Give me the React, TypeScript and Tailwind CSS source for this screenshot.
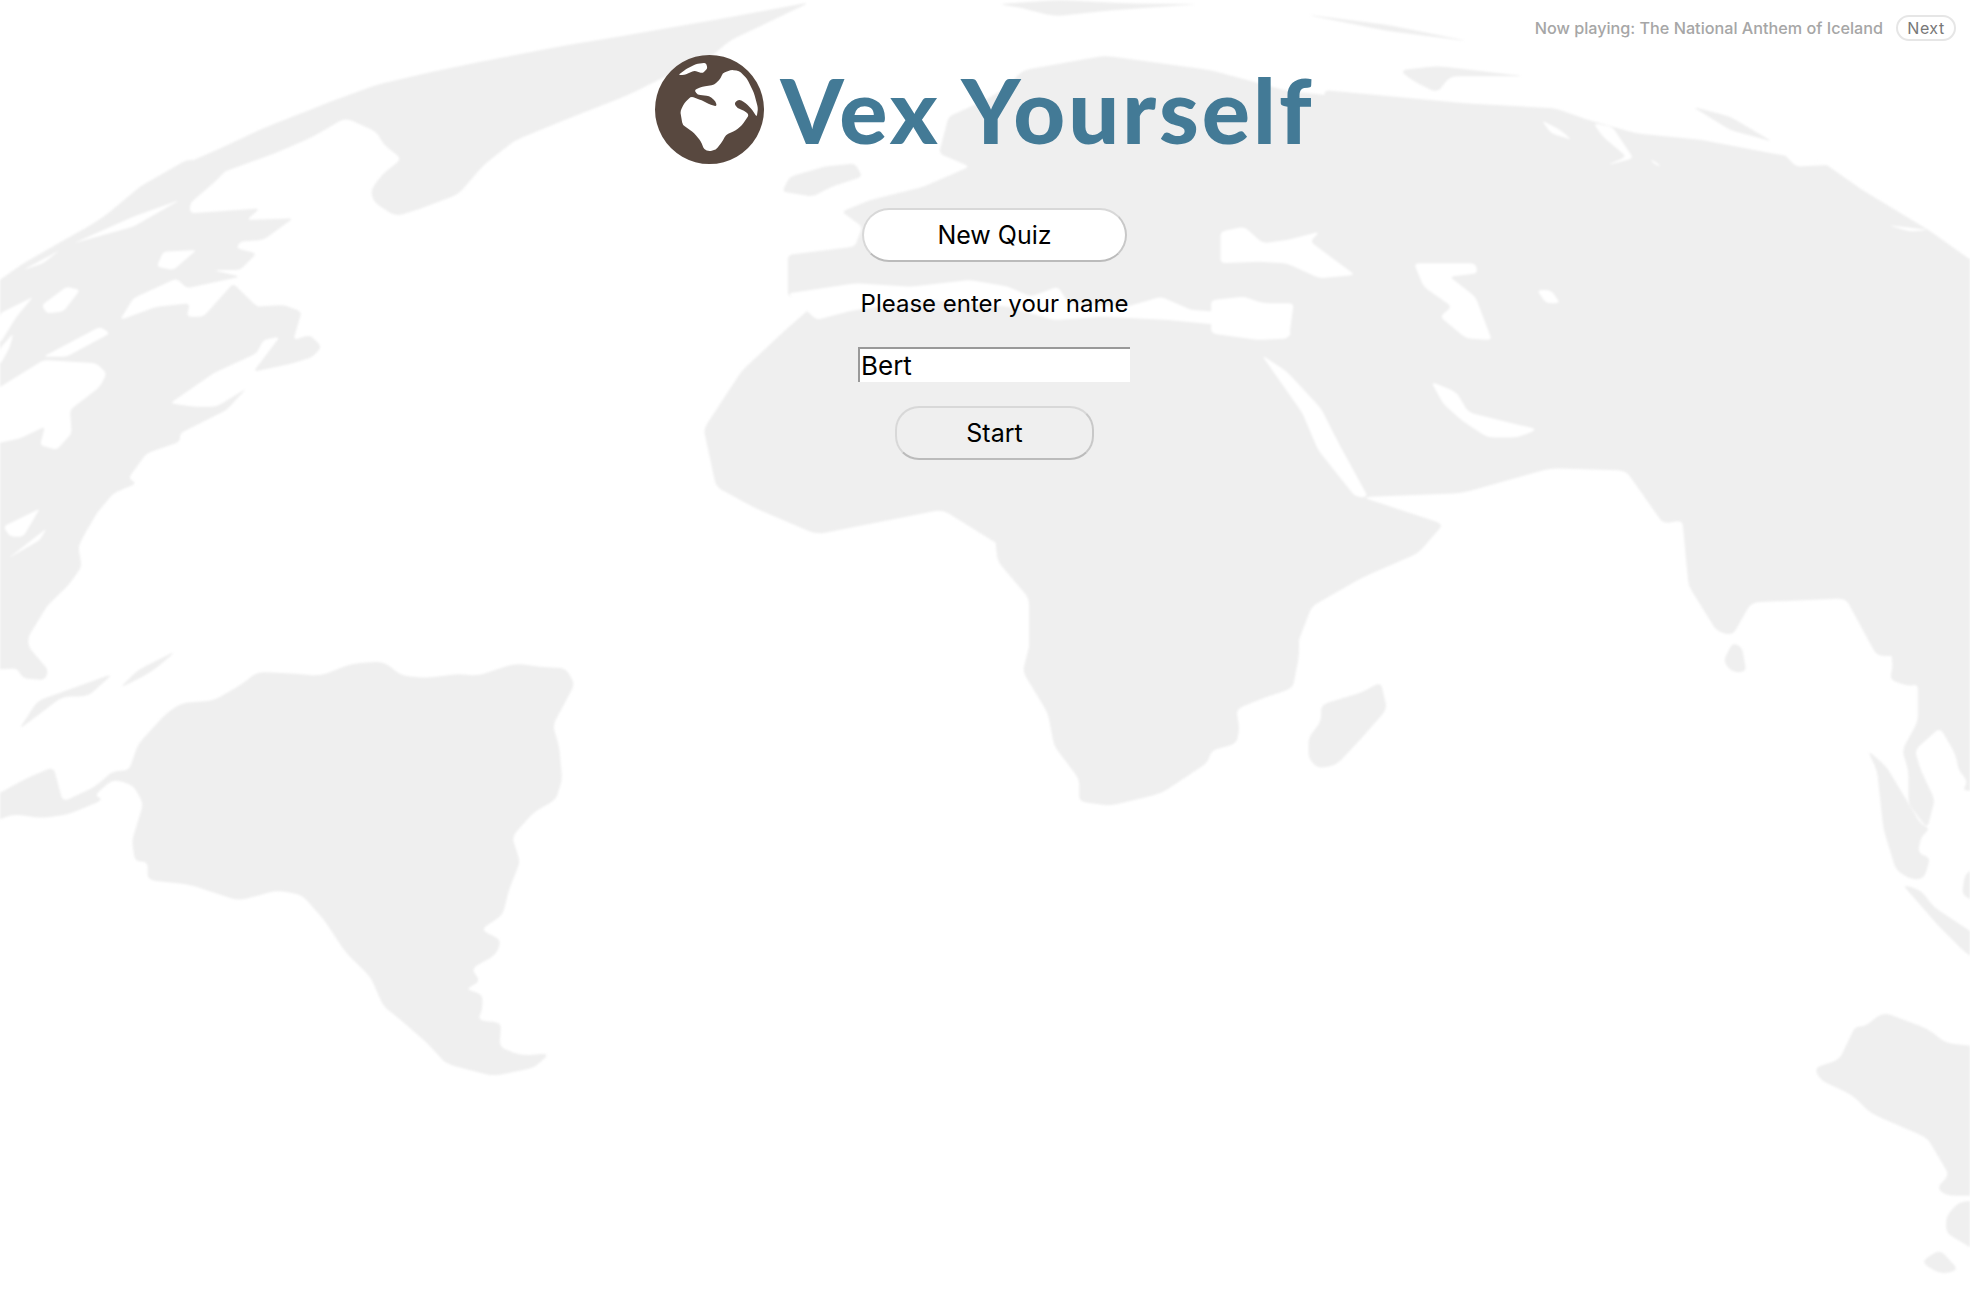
const rounded = (s: string, r = 14) => {
  const p = s.trim().split(/\s+/).map((t) => t.split(",").map(Number));
  const n = p.length;
  let d = "";
  p.forEach((c, i) => {
    const a = p[(i - 1 + n) % n];
    const b = p[(i + 1) % n];
    const la = Math.hypot(a[0] - c[0], a[1] - c[1]) || 1;
    const lb = Math.hypot(b[0] - c[0], b[1] - c[1]) || 1;
    const ra = Math.min(r, la / 2);
    const rb = Math.min(r, lb / 2);
    const s1 = [c[0] + ((a[0] - c[0]) * ra) / la, c[1] + ((a[1] - c[1]) * ra) / la];
    const s2 = [c[0] + ((b[0] - c[0]) * rb) / lb, c[1] + ((b[1] - c[1]) * rb) / lb];
    d += `${i ? "L" : "M"}${s1[0].toFixed(1)} ${s1[1].toFixed(1)}Q${c[0]} ${c[1]} ${s2[0].toFixed(1)} ${s2[1].toFixed(1)}`;
  });
  return d + "Z";
};

const Q1_LAND = [
  "1290,5 1150,45 1000,85 900,110 780,145 700,170 600,205 520,250 420,310 350,360 260,420 200,490 100,590 30,650 -20,700 -20,720 30,660 100,600 170,530 260,450 350,420 440,370 500,330 550,285 600,320 610,350 640,385 610,420 590,460 595,490 630,525 680,500 730,470 770,400 820,340 900,290 1000,230 1080,170 1130,140 1160,100",
  "1590,1320 1500,1235 1300,1295 1200,1230 1140,1180 1120,1040 1180,900 1250,800 1310,720 1590,680",
];
const NA_LAND = [
  "710,-30 640,40 570,100 570,130 780,115 740,150 880,145 790,210 720,215 710,235 770,250 720,300 640,300 720,320 560,355 530,325 400,385 360,450 470,410 570,400 560,440 610,440 700,340 770,410 850,405 905,425 880,510 930,495 965,530 940,560 880,580 760,605 840,500 790,510 770,550 640,610 510,700 580,710 650,710 740,655 680,720 540,790 540,815 440,850 385,925 410,940 340,970 290,1030 250,1100 235,1130 245,1190 210,1240 140,1310 85,1400 85,1430 145,1500 135,1530 70,1525 50,1495 -30,1500 -30,350 70,280 210,200 300,150 420,50 560,-30",
];
const NA_HOLES = [
  "-30,670 130,570 290,580 320,610 300,650 210,720 215,790 170,840 120,825 135,770 60,805 -30,825",
  "0,430 100,380 50,440 0,520",
  "0,535 40,490 30,530 0,585",
  "125,405 200,350 240,360 190,425 140,430",
  "220,220 400,140 540,90 400,170",
  "70,300 180,240 130,280",
  "470,290 490,245 590,240 520,300",
  "400,400 530,330 430,395",
  "130,560 300,470 330,490 200,560",
  "10,1070 120,1015 70,1100 30,1100",
  "25,1165 140,1075 120,1110",
];
const Q2_LAND = [
  "-20,300 60,170 190,135 360,170 480,220 600,240 760,280 900,300 1000,390 1080,400 1200,400 1300,440 1420,530 1500,590 1590,640 1590,1590 1420,1590 1370,1450 1220,1460 1190,1540 1165,1530 1120,1420 1110,1260 1080,1270 1020,1140 900,1135 760,1195 600,1205 730,1270 690,1340 600,1400 520,1470 490,1590 70,1590 70,1450 20,1360 15,1290 -20,1270",
  "20,10 120,0 230,8 340,10 200,25 110,40 60,20",
  "510,35 640,60 770,100 640,75",
  "660,170 720,160 860,185 740,185 720,225 680,195",
];
const Q2_HOLES = [
  "440,860 480,900 535,990 565,1080 610,1205 590,1205 530,1090 505,1000",
  "710,925 750,950 770,1000 850,1030 880,1040 850,1060 800,1060 760,1020 730,980",
];
const SIB_LAND = [
  "200,-30 500,10 690,25 760,60 860,100 1000,120 1150,160 1260,190 1340,270 1480,390 1570,480 1570,900 200,900",
  "980,20 1060,50 1150,125 1060,90",
];
const SIB_HOLES = [
  "660,60 700,90 725,120 680,100",
  "770,70 810,80 855,175 800,195 840,170 790,110",
  "890,175 915,200 900,195",
  "1165,150 1270,195 1200,200",
  "1395,375 1480,390 1440,395",
  "390,490 520,490 525,520 465,530 520,590 555,720 500,715 445,650 470,620 410,560",
  "650,570 680,570 700,610 670,610",
  "-20,395 30,380 70,430 120,420 190,395 170,425 265,525 190,535 120,490 60,485 -20,490",
  "-40,600 30,590 70,610 135,610 125,715 60,720 -40,700",
];
const Q3_LAND = [
  "30,200 60,130 180,65 140,120 100,120",
  "190,100 220,55 280,10 250,50 230,70",
  "290,135 340,130 385,90 410,60 470,65 510,70 560,40 610,35 640,70 680,75 730,65 760,70 820,40 870,50 900,50 915,90 880,190 890,240 895,320 885,370 850,400 815,460 828,520 810,590 800,650 765,685 798,710 790,745 750,780 765,810 740,830 768,840 768,880 760,905 798,910 795,970 830,990 875,985 850,1020 785,1040 710,1010 680,960 635,900 610,870 590,800 550,740 515,660 480,600 440,590 380,615 300,575 235,565 235,520 215,520 210,470 228,380 212,335 180,320 150,360 165,370 110,405 70,415 20,405 -20,430 -20,370 40,320 85,290 100,375 150,340 180,300 205,300 220,235 265,160",
];
const Q4_LAND = [
  "75,-30 60,60 100,160 110,240 150,320 150,375 200,385 280,355 355,280 360,250 400,235 405,200 400,150 450,120 490,100 500,20 500,-30",
  "630,85 640,150 600,220 560,285 530,295 515,270 515,220 535,180 535,140 600,110",
  "1190,-10 1205,0 1212,60 1190,62 1175,35",
  "1440,-30 1445,50 1440,80 1470,95 1485,90 1485,180 1460,250 1470,300 1470,380 1500,440 1512,370 1490,300 1480,250 1520,195 1545,260 1550,300 1565,325 1555,350 1590,345 1590,-30",
  "1405,250 1435,290 1490,430 1505,440 1490,460 1485,500 1505,510 1495,560 1475,565 1450,540 1430,440 1420,300",
  "1460,575 1490,590 1510,630 1540,660 1590,710 1590,770 1560,740 1520,680",
  "1590,520 1560,550 1555,600 1590,630",
  "1430,885 1500,925 1530,960 1590,970 1590,1330 1530,1330 1515,1310 1535,1280 1500,1190 1410,1130 1380,1085 1330,1050 1320,1020 1360,1000 1385,920 1400,920",
  "1590,1340 1550,1345 1530,1380 1530,1420 1590,1475",
  "1490,1490 1520,1460 1550,1510 1520,1520",
];
const EU_LAND = [
  "125,375 300,350 320,290 265,245 340,210 480,170 600,110 520,70 545,-40 640,-90 760,-170 900,-200 1100,-100 1100,600 125,500",
  "110,185 130,140 220,110 300,100 320,140 240,170 190,200",
];
const EU_HOLES = [
  "125,490 300,460 450,470 600,450 700,470 760,500 830,470 860,520 1010,530 1100,500 1180,540 1430,560 1440,620 1300,590 1120,570 950,560 820,570 700,530 500,510 300,540 200,570",
];

const GLOBE_LAND =
  rounded("112,105 135,88 165,72 195,68 200,85 185,100 160,92 130,105", 6) +
  rounded(
    "245,100 270,90 295,92 320,118 340,160 352,205 348,232 335,210 315,190 295,178 280,190 290,205 310,212 325,225 305,255 285,272 255,285 245,305 225,330 205,335 190,330 180,305 160,280 125,255 118,215 130,190 150,170 175,178 210,195 228,200 225,185 205,168 170,165 160,150 185,140 220,135 240,115",
    8,
  );

function Land({ shapes, holes = [], transform }: { shapes: string[]; holes?: string[]; transform: string }) {
  return (
    <g transform={transform}>
      {shapes.map((s, i) => (
        <path key={i} d={rounded(s)} className="fill-[#efefef]" />
      ))}
      {holes.map((s, i) => (
        <path key={i} d={rounded(s, 12)} className="fill-white" />
      ))}
    </g>
  );
}

function WorldMap() {
  return (
    <svg viewBox="0 0 1970 1294" className="absolute inset-0 h-[1294px] w-[1970px] blur-[1px]" aria-hidden="true">
      <Land shapes={Q1_LAND} transform="scale(.6282 .41263)" />
      <Land shapes={NA_LAND} transform="translate(0 170) scale(.33333)" />
      <Land shapes={Q2_LAND} transform="translate(985 0) scale(.6282 .41263)" />
      <Land shapes={SIB_LAND} transform="translate(1230 100) scale(.4719 .33333)" />
      <Land shapes={Q3_LAND} transform="translate(0 647) scale(.6282 .41263)" />
      <Land shapes={Q4_LAND} transform="translate(985 647) scale(.6282 .41263)" />
      <Land shapes={EU_LAND} transform="translate(740 130) scale(.3827 .3333)" />
      <Land shapes={[]} holes={NA_HOLES} transform="translate(0 170) scale(.33333)" />
      <Land shapes={[]} holes={Q2_HOLES} transform="translate(985 0) scale(.6282 .41263)" />
      <Land shapes={[]} holes={SIB_HOLES} transform="translate(1230 100) scale(.4719 .33333)" />
      <Land shapes={[]} holes={EU_HOLES} transform="translate(740 130) scale(.3827 .3333)" />
    </svg>
  );
}

function Globe() {
  return (
    <svg viewBox="42 45 328 328" className="h-[109px] w-[109px] shrink-0" aria-hidden="true">
      <path
        fillRule="evenodd"
        className="fill-[#58483f]"
        d={`M206 45a164 164 0 1 0 .01 0Z${GLOBE_LAND}`}
      />
    </svg>
  );
}

export default function App() {
  const sans = "font-['Inter','Liberation_Sans',sans-serif]";
  return (
    <div className={`relative h-[1294px] w-full overflow-hidden bg-white ${sans}`}>
      <WorldMap />
      <div className="relative flex flex-col">
        <div className="flex items-center justify-end gap-[13px] pr-[14px] pt-[15px]">
          <span className="text-[16.2px] font-medium leading-[26px] text-[#a6a6a6]">
            Now playing: The National Anthem of Iceland
          </span>
          <button className="h-[26px] w-[60px] rounded-[13px] border-2 border-[#e6e6e6] text-[16px] leading-none tracking-[0.5px] text-[#777777]">
            Next
          </button>
        </div>
        <div className="mt-[14px] flex items-center justify-center gap-[16px]">
          <Globe />
          <h1 className="font-['Lato',sans-serif] text-[90px] font-black leading-[109px] tracking-[3px] text-[#437a96]">
            Vex Yourself
          </h1>
        </div>
        <div className="mt-[44px] flex flex-col items-center pl-[19px]">
          <button className="h-[54px] w-[265px] rounded-[27px] border-2 border-[#d8d8d8] border-b-[#bbbbbb] border-r-[#c8c8c8] bg-white pt-[1px] text-[25px] text-black">
            New Quiz
          </button>
          <p className="mt-[27px] text-[24px] leading-[30px] text-black">Please enter your name</p>
          <input
            defaultValue="Bert"
            className="ml-[-1px] mt-[28px] h-[35px] w-[272px] rounded-none border-l-2 border-t-2 border-[#999999] bg-white pb-[1px] pl-[1px] text-[26px] text-black outline-none"
          />
          <button className="mt-[24px] h-[54px] w-[199px] rounded-[24px] border-2 border-[#d8d8d8] border-b-[#bbbbbb] border-r-[#c8c8c8] bg-transparent pt-[1px] text-[25px] text-black">
            Start
          </button>
        </div>
      </div>
    </div>
  );
}
